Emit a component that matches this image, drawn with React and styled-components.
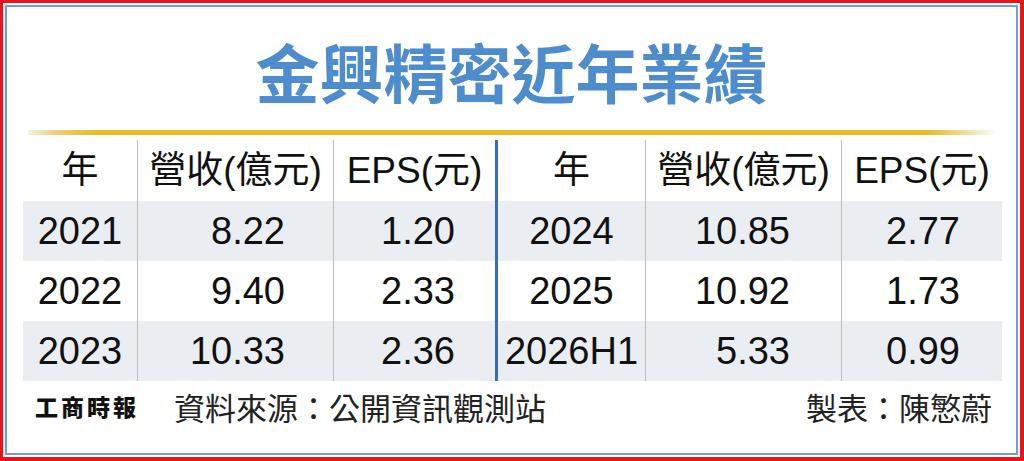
import React from "react";
import styled, { createGlobalStyle } from "styled-components";

const Global = createGlobalStyle`
  html, body { margin: 0; padding: 0; background: #fff; }
  body { width: 1024px; height: 461px; overflow: hidden; }
`;

const Outer = styled.div`
  box-sizing: border-box;
  width: 1024px;
  height: 461px;
  border-style: solid;
  border-color: #e8141c;
  border-width: 3px 4px 4px 3px;
  padding: 2px;
  background: #fff;
`;

const Frame = styled.div`
  box-sizing: border-box;
  width: 100%;
  height: 100%;
  border: 2px solid #6f9fd3;
  display: flex;
  flex-direction: column;
`;

const Title = styled.h1`
  box-sizing: border-box;
  margin: 0;
  height: 123px;
  padding-top: 31px;
  text-align: center;
  font-family: "Noto Sans CJK TC", "Noto Sans", sans-serif;
  font-weight: 700;
  font-size: 64px;
  line-height: 64px;
  color: #4d8dcd;
  letter-spacing: 0;
`;

const GoldRule = styled.div`
  height: 5px;
  margin: 0 19px 0 21px;
  background: linear-gradient(
    to right,
    #f6f1e4 0%,
    #e9cf73 3%,
    #e5c025 7%,
    #e5c025 93%,
    #efe0a6 97%,
    #ffffff 100%
  );
`;

const Table = styled.div`
  margin: 5px 14px 0 16px;
  display: flex;
  flex-direction: column;
`;

const Row = styled.div`
  display: grid;
  grid-template-columns: 114px 196px 162px 150px 196px 161px;
  height: ${(p) => (p.$header ? 61 : 60)}px;
  background: ${(p) => (p.$shade ? "#eaedf2" : "#ffffff")};
`;

const Cell = styled.div`
  box-sizing: border-box;
  display: flex;
  align-items: center;
  justify-content: ${(p) => (p.$right ? "flex-end" : "center")};
  padding-right: ${(p) => p.$pad || 0}px;
  border-left: ${(p) =>
    p.$line === "blue"
      ? "3px solid #3a6cb0"
      : p.$line === "thin"
      ? "1px solid #bdbdbd"
      : "none"};
  font-family: "Liberation Sans", "Noto Sans CJK TC", sans-serif;
  font-size: ${(p) => (p.$head ? 37 : 38)}px;
  line-height: 60px;
  color: #111;
  white-space: nowrap;
`;

const Footer = styled.div`
  flex: 1;
  display: flex;
  justify-content: space-between;
  align-items: flex-start;
  padding: 10px 24px 0 28px;
`;

const SourceGroup = styled.div`
  display: flex;
  align-items: center;
  gap: 35px;
`;

const Logo = styled.span`
  font-family: "Noto Sans CJK TC", sans-serif;
  font-weight: 900;
  font-size: 23px;
  letter-spacing: 3px;
  line-height: 31px;
  color: #111;
`;

const Note = styled.span`
  font-family: "Noto Sans CJK TC", sans-serif;
  font-weight: 400;
  font-size: 31px;
  line-height: 31px;
  color: #222;
`;

const headers = ["年", "營收(億元)", "EPS(元)", "年", "營收(億元)", "EPS(元)"];
const rows = [
  ["2021", "8.22", "1.20", "2024", "10.85", "2.77"],
  ["2022", "9.40", "2.33", "2025", "10.92", "1.73"],
  ["2023", "10.33", "2.36", "2026H1", "5.33", "0.99"],
];
const lines = [null, "thin", "thin", "blue", "thin", "thin"];
const pads = [0, 48, 40, 0, 51, 42];

export default function App() {
  return (
    <>
      <Global />
      <Outer>
        <Frame>
          <Title>金興精密近年業績</Title>
          <GoldRule />
          <Table>
            <Row $header>
              {headers.map((h, i) => (
                <Cell key={i} $head $line={lines[i]}>
                  {h}
                </Cell>
              ))}
            </Row>
            {rows.map((r, ri) => (
              <Row key={ri} $shade={ri !== 1}>
                {r.map((v, i) => (
                  <Cell
                    key={i}
                    $line={lines[i]}
                    $right={pads[i] > 0}
                    $pad={pads[i]}
                  >
                    {v}
                  </Cell>
                ))}
              </Row>
            ))}
          </Table>
          <Footer>
            <SourceGroup>
              <Logo>工商時報</Logo>
              <Note>資料來源：公開資訊觀測站</Note>
            </SourceGroup>
            <Note>製表：陳慜蔚</Note>
          </Footer>
        </Frame>
      </Outer>
    </>
  );
}
